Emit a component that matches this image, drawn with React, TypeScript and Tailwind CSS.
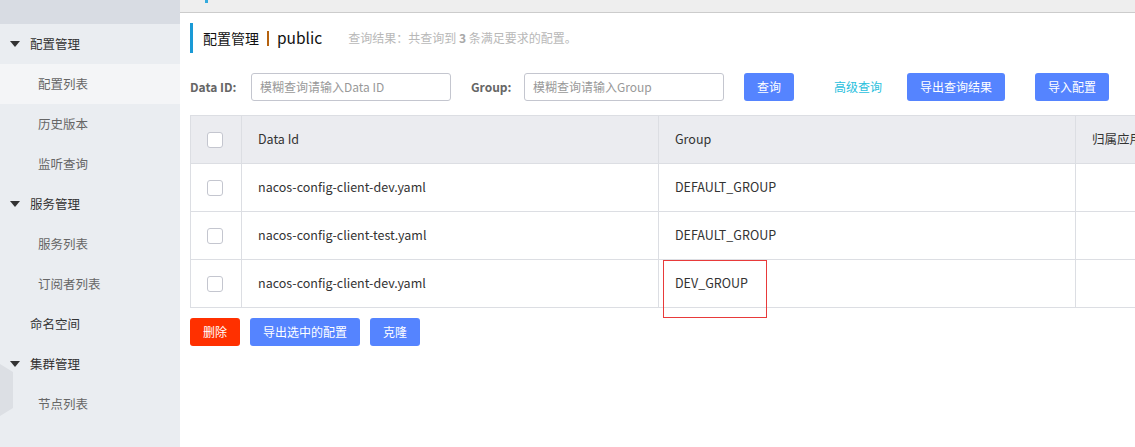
import React from "react";

const font = { fontFamily: '"Noto Sans CJK SC", "Liberation Sans", sans-serif' };

type NavItem = { label: string; level: 0 | 1; open?: boolean; active?: boolean };

const nav: NavItem[] = [
  { label: "配置管理", level: 0, open: true },
  { label: "配置列表", level: 1, active: true },
  { label: "历史版本", level: 1 },
  { label: "监听查询", level: 1 },
  { label: "服务管理", level: 0, open: true },
  { label: "服务列表", level: 1 },
  { label: "订阅者列表", level: 1 },
  { label: "命名空间", level: 0 },
  { label: "集群管理", level: 0, open: true },
  { label: "节点列表", level: 1 },
];

const rows = [
  { id: "nacos-config-client-dev.yaml", group: "DEFAULT_GROUP" },
  { id: "nacos-config-client-test.yaml", group: "DEFAULT_GROUP" },
  { id: "nacos-config-client-dev.yaml", group: "DEV_GROUP", marked: true },
];

function Checkbox() {
  return <span className="block w-4 h-4 rounded-[3px] border border-[#c4c6cf] bg-white" />;
}

function Sidebar() {
  return (
    <aside className="relative w-[180px] shrink-0 bg-[#eaedf1] h-[447px] overflow-hidden">
      <div className="h-6 bg-[#d8dce3]" />
      {nav.map((n, i) => (
        <div
          key={i}
          className={`h-10 flex items-center text-[12.5px] ${n.active ? "bg-[#f4f5f7]" : ""} ${
            n.level === 0 ? "pl-[10px] text-[#333]" : "pl-[38px] text-[#666]"
          }`}
        >
          {n.level === 0 && (
            <span className="w-5 flex items-center">
              {n.open && (
                <svg width="10" height="6" viewBox="0 0 10 6">
                  <path d="M0 0 H10 L5 6 Z" fill="#333" />
                </svg>
              )}
            </span>
          )}
          {n.label}
        </div>
      ))}
      <svg className="absolute left-0 top-[362px]" width="14" height="56" viewBox="0 0 14 56">
        <path d="M0 2 L13 10 V46 L0 54 Z" fill="#dcdfe4" />
      </svg>
    </aside>
  );
}

export default function App() {
  return (
    <div className="flex w-[1135px] h-[447px] bg-white overflow-hidden" style={font}>
      <Sidebar />
      <main className="flex-1 min-w-0 relative">
        <div className="h-[13px] bg-[#eeeeee] border-b border-[#cccccc] relative">
          <span className="absolute left-[25px] top-0 w-[3px] h-[3px] bg-[#33aadd]" />
        </div>
        <div className="pl-[10px]">
          {/* Title */}
          <div className="mt-[10px] flex items-center h-[30px] border-l-[3px] border-[#1a9ad6] pl-[10px]">
            <span className="text-[14px] text-[#111]">配置管理</span>
            <span className="w-[2px] h-[15px] bg-[#b5620f] mx-[8px]" />
            <span className="text-[15.5px] text-[#111]">public</span>
            <span className="ml-[26px] text-[12px] text-[#b8b8b8]">
              查询结果：共查询到 <b className="text-[#a8a8a8]">3</b> 条满足要求的配置。
            </span>
          </div>

          {/* Search bar */}
          <div className="mt-[20px] flex items-center h-7 text-[12px]">
            <span className="font-bold text-[#666] w-[61px]">Data ID:</span>
            <div className="w-[200px] h-7 border border-[#c4c6cf] rounded-[3px] flex items-center px-2 text-[#999]">
              模糊查询请输入Data ID
            </div>
            <span className="font-bold text-[#666] ml-5 w-[53px]">Group:</span>
            <div className="w-[200px] h-7 border border-[#c4c6cf] rounded-[3px] flex items-center px-2 text-[#999]">
              模糊查询请输入Group
            </div>
            <button className="ml-5 w-[50px] h-7 rounded-[3px] bg-[#5584ff] text-white">查询</button>
            <span className="ml-10 text-[#2ac0dd]">高级查询</span>
            <button className="ml-[25px] w-[98px] h-7 rounded-[3px] bg-[#5584ff] text-white">导出查询结果</button>
            <button className="ml-[30px] w-[74px] h-7 rounded-[3px] bg-[#5584ff] text-white">导入配置</button>
          </div>

          {/* Table */}
          <table className="mt-[14px] border-collapse text-[12.5px] text-[#333] w-[1000px] table-fixed">
            <colgroup>
              <col className="w-[51px]" />
              <col className="w-[417px]" />
              <col className="w-[417px]" />
              <col className="w-[200px]" />
            </colgroup>
            <thead>
              <tr className="h-12 bg-[#ebecf0]">
                <th className="border border-[#dcdee3] pl-4 font-normal text-left"><Checkbox /></th>
                <th className="border border-[#dcdee3] pl-4 font-normal text-left">Data Id</th>
                <th className="border border-[#dcdee3] pl-4 font-normal text-left">Group</th>
                <th className="border border-[#dcdee3] pl-4 font-normal text-left">归属应用</th>
              </tr>
            </thead>
            <tbody>
              {rows.map((r, i) => (
                <tr key={i} className="h-12">
                  <td className="border border-[#dcdee3] pl-4"><Checkbox /></td>
                  <td className="border border-[#dcdee3] pl-4">{r.id}</td>
                  <td className="border border-[#dcdee3] pl-4 relative">
                    {r.group}
                    {r.marked && (
                      <span className="absolute left-[4px] top-0 w-[104px] h-[58px] border border-[#e83a3a]" />
                    )}
                  </td>
                  <td className="border border-[#dcdee3]" />
                </tr>
              ))}
            </tbody>
          </table>

          {/* Batch actions */}
          <div className="mt-[10px] flex gap-[10px] text-[12px]">
            <button className="w-[50px] h-7 rounded-[3px] bg-[#ff3000] text-white">删除</button>
            <button className="w-[110px] h-7 rounded-[3px] bg-[#5584ff] text-white">导出选中的配置</button>
            <button className="w-[50px] h-7 rounded-[3px] bg-[#5584ff] text-white">克隆</button>
          </div>
        </div>
      </main>
    </div>
  );
}
